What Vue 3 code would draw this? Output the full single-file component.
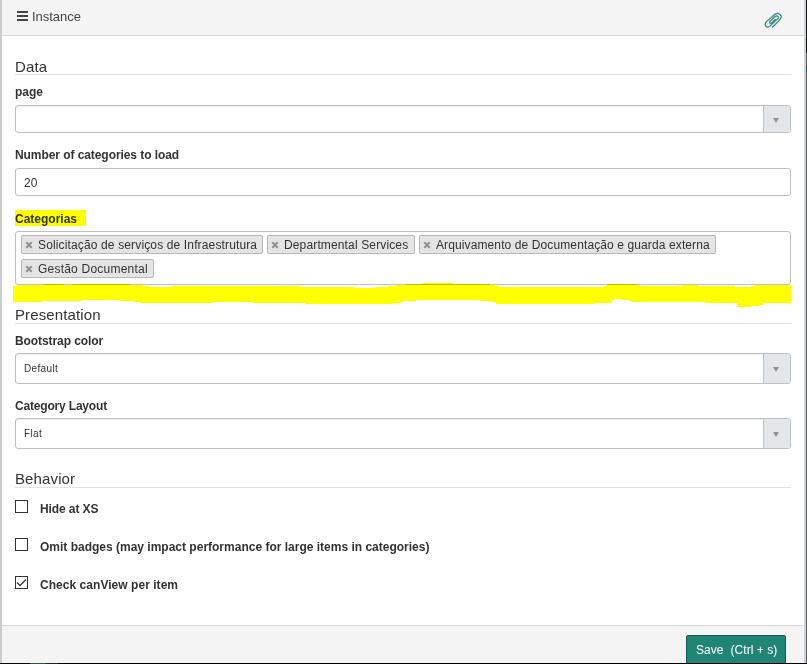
<script setup>
import { ref } from 'vue'

const categories = [
  { name: 'Solicitação de serviços de Infraestrutura', width: 242, spacing: 0.14 },
  { name: 'Departmental Services', width: 148, spacing: 0.14 },
  { name: 'Arquivamento de Documentação e guarda externa', width: 297, spacing: 0.11 },
  { name: 'Gestão Documental', width: 133, spacing: 0.22 },
]
const options = ref([
  { label: 'Hide at XS', checked: false, cls: 'hide' },
  { label: 'Omit badges (may impact performance for large items in categories)', checked: false, cls: 'omit' },
  { label: 'Check canView per item', checked: true, cls: 'check' },
])
</script>

<template>
  <div class="screen">
    <div class="modal">
      <header class="header">
        <div class="title">
          <svg class="bars" width="12" height="11" viewBox="0 0 12 11"><path d="M0 0h11v2H0zM0 4h11v2H0zM0 8h11v2H0z" fill="#444" /></svg>
          <span>Instance</span>
        </div>
        <svg class="clip" width="18" height="17" viewBox="0 0 18 17" fill="none" stroke="#26877a" stroke-width="1.2" stroke-linecap="round" stroke-linejoin="round">
          <path d="M8.6 15L15.8 7.8C19.2 4.1 15-.5 11 2.3L2.2 9.9C-.5 12.9 2.7 16.6 5.8 14.1L13.6 6.9C15.4 5 13.2 2.9 11.2 4.5L6 9.3C4.7 10.7 6.3 12.2 7.7 10.9L11.3 7.4" />
        </svg>
      </header>

      <main class="body">
        <h4 class="section data">Data</h4>
        <label class="label page">page</label>
        <div class="select small"><span class="value"></span><span class="arrow"><i></i></span></div>

        <label class="label number">Number of categories to load</label>
        <div class="input">20</div>

        <label class="label categorias"><mark>Categorias</mark></label>
        <div class="tags">
          <span v-for="c in categories" :key="c.name" class="tag" :style="{ width: c.width + 'px', letterSpacing: c.spacing + 'px' }">
            <svg width="8" height="8" viewBox="0 0 8 8"><path d="M1.3 1.3L6.7 6.7M6.7 1.3L1.3 6.7" stroke="#929292" stroke-width="2.1" /></svg>
            <span>{{ c.name }}</span>
          </span>
        </div>

        <h4 class="section presentation">Presentation</h4>
        <label class="label bootstrap">Bootstrap color</label>
        <div class="select"><span class="value">Default</span><span class="arrow"><i></i></span></div>
        <label class="label layout">Category Layout</label>
        <div class="select"><span class="value">Flat</span><span class="arrow"><i></i></span></div>

        <h4 class="section behavior">Behavior</h4>
        <div class="options">
          <div v-for="o in options" :key="o.label" class="option" @click="o.checked = !o.checked">
            <span class="box">
              <svg v-if="o.checked" width="11" height="11" viewBox="0 0 11 11"><path d="M1 5.5L4 8.5L10 2.5" fill="none" stroke="#333" stroke-width="1.3" /></svg>
            </span>
            <span class="text" :class="o.cls">{{ o.label }}</span>
          </div>
        </div>
      </main>

      <footer class="footer"><button class="save"><span>Save</span><span>(Ctrl + s)</span></button></footer>
    </div>
    <div class="backdrop"></div>
    <div class="bottom"></div>

    <svg class="marker" width="778" height="25" viewBox="13 283 778 25" shape-rendering="crispEdges">
      <path fill="#ff0" d="M13 286H18V285H44V284H63V285H72V284H130V285H143V286H150V287H171V286H301V287H355V288H375V287H388V286H396V285H406V284H423V283H453V284H490V285H495V286H499V287H604V286H607V284H636V285H640V286H681V285H698V286H735V287H751V286H755V285H791V303H763V305H759V306H751V307H737V303H705V302H631V301H629V300H622V299H615V300H611V303H595V304H496V302H492V301H480V300H416V301H404V302H401V303H393V304H305V303H252V302H213V303H140V302H133V301H120V300H82V301H42V302H13Z" />
    </svg>
  </div>
</template>

<style>
body { background: #fff; overflow: hidden; }
</style>

<style scoped>
* { box-sizing: border-box; }
.screen {
  position: relative;
  display: grid;
  grid-template: 663px 1px / 806px 1px;
  width: 807px;
  height: 664px;
  overflow: hidden;
  font-family: "Liberation Sans", Arial, sans-serif;
  font-size: 12px;
  color: #333;
}
.modal {
  display: flex;
  flex-direction: column;
  min-height: 0;
  border-left: 2px solid #ccc;
  border-right: 2px solid #d2d2d2;
  background: #fff;
}
.backdrop { background: linear-gradient(#101317 0 53px, #5b5d5f 53px 66px, #2a4c5d 66px 72px, #5b5d5f 72px); }
.bottom { grid-column: 1 / 3; background: linear-gradient(90deg, #080909 0 30px, #385039 30px 45px, #202322 45px 58px, #000 58px); }
.header {
  display: flex;
  flex: none;
  justify-content: space-between;
  height: 36px;
  padding: 9px 22px 0 15px;
  background: #f4f4f4;
  border-bottom: 1px solid #d9d9d9;
}
.title { display: flex; height: 15px; line-height: 15px; font-size: 13px; letter-spacing: -.04px; color: #444; }
.bars { margin: 2px 3px 0 0; }
.clip { margin-top: 3px; }
.body { display: flex; flex: none; flex-direction: column; height: 589px; padding: 21px 13px 0; }
.section {
  flex: none;
  height: 18px;
  margin: 0;
  line-height: 19px;
  font-size: 15px;
  font-weight: 400;
  letter-spacing: .12px;
  border-bottom: 1px solid #e3e3e3;
  white-space: nowrap;
}
.label { display: block; flex: none; height: 16px; line-height: 16px; font-weight: 700; white-space: nowrap; }
.page { margin: 9px 0 5px; }
.number { margin: 14px 0 5px; letter-spacing: -.07px; }
.categorias { margin: 14px 0 5px; }
.categorias mark { display: block; width: 71px; height: 16px; line-height: 18px; color: #333300; background: #ff0; }
.bootstrap { margin: 9px 0 4px; letter-spacing: -.08px; }
.layout { margin: 14px 0 4px; letter-spacing: -.18px; }
.select, .input, .tags { flex: none; border: 1px solid #bdc0c5; border-radius: 3px; background: #fff; }
.select { display: flex; height: 31px; overflow: hidden; box-shadow: inset 0 1px 0 #eee; }
.select.small { height: 28px; }
.value { flex: 1; padding-left: 8px; line-height: 29px; font-size: 10px; letter-spacing: .35px; }
.arrow { display: flex; align-items: center; justify-content: center; width: 27px; padding-right: 2px; background: #e4e7ea; border-left: 1px solid #bdc0c5; }
.arrow i { margin-top: 2px; border: 3px solid transparent; border-top: 5px solid #909294; border-bottom: 0; }
.input { height: 28px; padding-left: 8px; line-height: 28px; letter-spacing: .2px; }
.tags { display: flex; flex-wrap: wrap; align-content: flex-start; gap: 5px 4px; height: 54px; padding: 3px 5px; }
.tag {
  display: flex;
  align-items: center;
  gap: 5px;
  height: 19px;
  padding: 0 3px;
  line-height: 17px;
  background: #e4e4e4;
  border: 1px solid #b8b8b8;
  border-radius: 2px;
  white-space: nowrap;
}
.tag svg { flex: none; }
.tag span { padding-top: 1px; }
.presentation { margin-top: 21px; line-height: 17px; }
.behavior { margin-top: 21px; line-height: 17px; }
.options { display: flex; flex-direction: column; gap: 22px; padding-top: 12px; }
.option { display: flex; gap: 12px; height: 16px; line-height: 18px; font-weight: 700; white-space: nowrap; }
.hide { letter-spacing: -.1px; }
.check { letter-spacing: .04px; }
.box { width: 13px; height: 13px; border: 1px solid #333; background: #fff; }
.box svg { display: block; }
.footer { display: flex; flex: 1; min-height: 0; justify-content: flex-end; padding: 9px 18px 0 0; background: #f4f4f4; border-top: 1px solid #d9d9d9; overflow: hidden; }
.save {
  display: flex;
  gap: 7px;
  justify-content: flex-start;
  width: 100px;
  height: 34px;
  padding: 6px 0 0 9px;
  font: 12px/16px "Liberation Sans", Arial, sans-serif;
  letter-spacing: .05px;
  color: #fff;
  background: #218576;
  border: 1px solid #185a50;
  border-radius: 2px;
  white-space: nowrap;
}
.marker { position: absolute; left: 13px; top: 283px; mix-blend-mode: multiply; pointer-events: none; }
</style>
